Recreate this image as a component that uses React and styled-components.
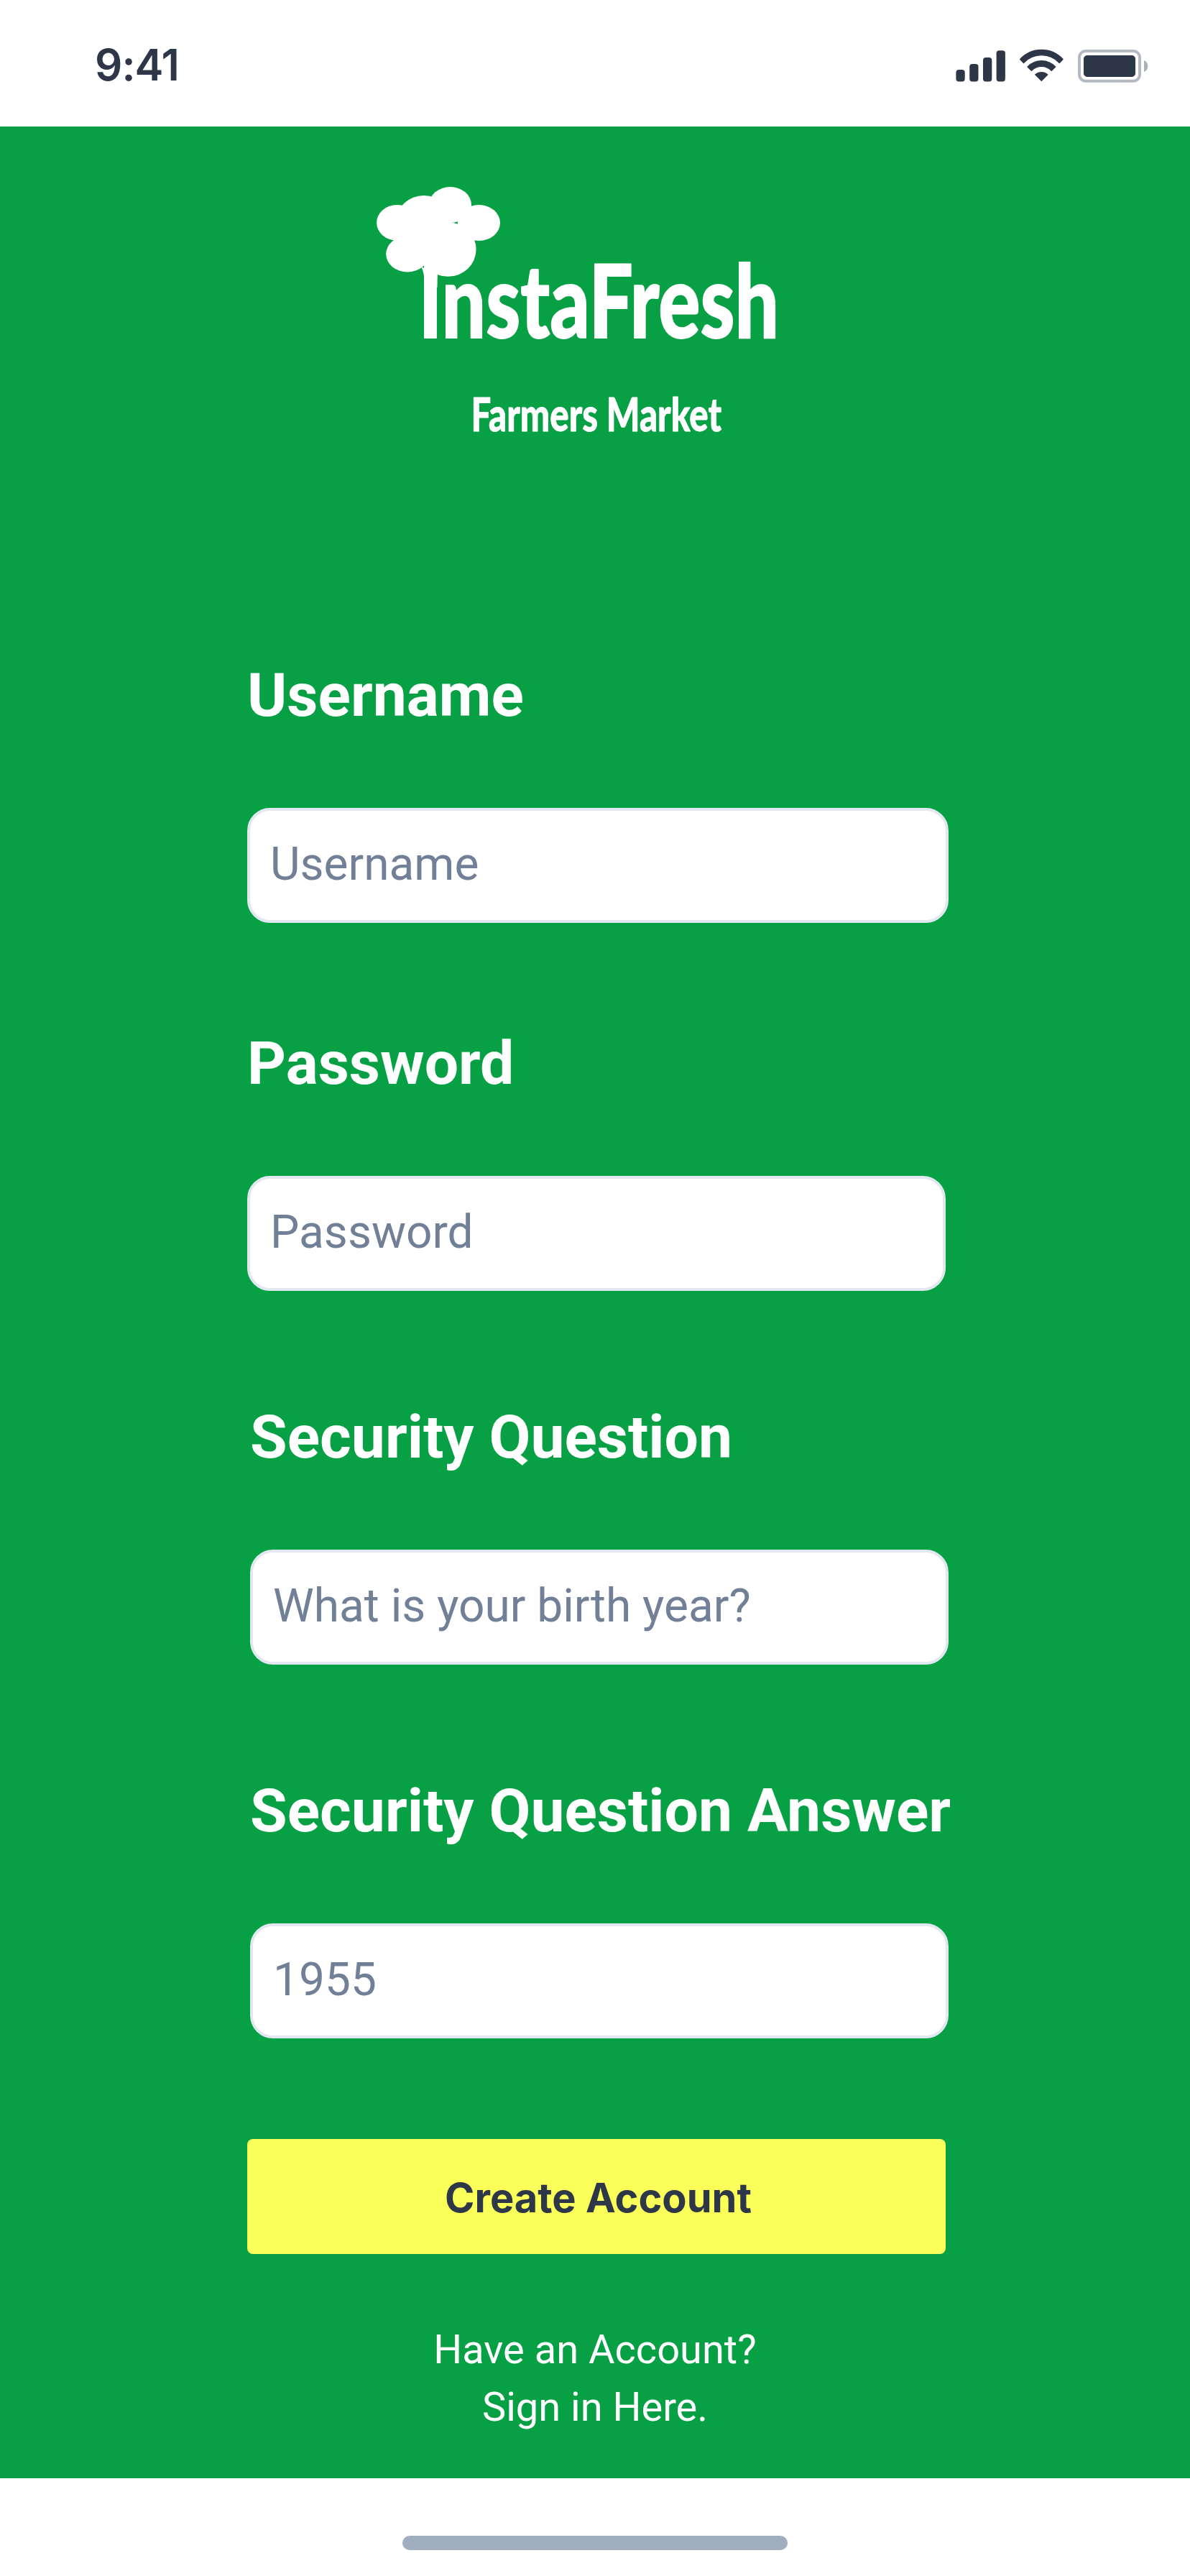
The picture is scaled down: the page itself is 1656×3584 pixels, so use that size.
import React from "react";
import styled, { createGlobalStyle } from "styled-components";

const GlobalStyle = createGlobalStyle`
  *, *::before, *::after { box-sizing: border-box; }
  body { margin: 0; background: #ffffff; }
`;

const ink = "#2d3748";

const Screen = styled.div`
  display: flex;
  flex-direction: column;
  width: 1656px;
  height: 3584px;
  background: #ffffff;
  font-family: Roboto, "Liberation Sans", sans-serif;
`;

const StatusBar = styled.header`
  display: flex;
  align-items: center;
  justify-content: space-between;
  height: 176px;
  padding: 4px 56px 0 132px;
`;

const Clock = styled.span`
  font-family: Inter, "Liberation Sans", sans-serif;
  font-size: 60px;
  font-weight: 600;
  line-height: 72px;
  letter-spacing: -1px;
  color: ${ink};
`;

const StatusIcons = styled.svg`
  display: block;
  width: 272px;
  height: 48px;
  margin-top: 4px;
`;

const Main = styled.main`
  display: flex;
  flex-direction: column;
  height: 3272px;
  background: #08a045;
`;

const Brand = styled.svg`
  display: block;
  width: 580px;
  height: 364px;
  margin: 74px 0 0 514px;
  fill: #ffffff;
  font-family: Lato, "Liberation Sans", sans-serif;
  font-weight: 900;
`;

const Wordmark = styled.text`
  font-size: ${(p) => p.$size}px;
  stroke: #ffffff;
  stroke-width: ${(p) => p.$size / 80}px;
  stroke-linejoin: round;
`;

const Form = styled.form`
  display: flex;
  flex-direction: column;
  align-items: flex-start;
  margin: 306px 0 0 344px;
`;

const Field = styled.label`
  display: flex;
  flex-direction: column;
  gap: 108px;
  margin: ${(p) => p.$top}px 0 0 ${(p) => p.$indent}px;
`;

const FieldTitle = styled.span`
  font-size: 84px;
  font-weight: 700;
  line-height: 96px;
  white-space: nowrap;
  color: #ffffff;
`;

const Input = styled.input`
  width: ${(p) => p.$width}px;
  height: 160px;
  padding: 0 28px 3px;
  border: 4px solid #e2e8f0;
  border-radius: 32px;
  outline: none;
  background: #ffffff;
  font-family: inherit;
  font-size: 64px;
  color: ${ink};

  &::placeholder {
    color: #718096;
    opacity: 1;
  }
`;

const SubmitButton = styled.button`
  width: 972px;
  height: 160px;
  margin-top: 140px;
  padding: 4px 0 0 5px;
  border: 0;
  border-radius: 8px;
  background: #faff5a;
  font-family: Inter, "Liberation Sans", sans-serif;
  font-size: 56px;
  font-weight: 700;
  line-height: 80px;
  color: ${ink};
`;

const SignInPrompt = styled.p`
  margin: 93px 0 0;
  font-size: 56px;
  line-height: 80px;
  text-align: center;
  color: #ffffff;
`;

const SignInLink = styled.a`
  display: block;
  color: inherit;
  text-decoration: none;
`;

const HomeBar = styled.footer`
  display: flex;
  justify-content: center;
  height: 136px;
  padding-top: 80px;
`;

const HomeIndicator = styled.div`
  width: 536px;
  height: 20px;
  border-radius: 10px;
  background: #a0aec0;
`;

const fields = [
  { title: "Username", hint: "Username", width: 976, indent: 0, top: 0 },
  { title: "Password", hint: "Password", width: 972, indent: 0, top: 148 },
  { title: "Security Question", hint: "What is your birth year?", width: 972, indent: 4, top: 156 },
  { title: "Security Question Answer", hint: "1955", width: 972, indent: 4, top: 156 },
];

const crown = [
  [552.8, 309.8, 28.7, 24.9],
  [590, 309, 39, 37],
  [626.5, 285, 29.5, 25],
  [666.4, 310, 29.6, 25],
  [567, 353.5, 29.8, 25],
  [623.6, 347, 39, 37.8],
];

function Logo() {
  return (
    <Brand viewBox="514 250 580 364">
      {crown.map(([cx, cy, rx, ry]) => (
        <ellipse key={cx} cx={cx} cy={cy} rx={rx} ry={ry} />
      ))}
      <path d="M586 372Q590 375 591.5 400H608.5L609 375Z" />
      <g transform="translate(582.5 470) scale(0.77 1)">
        <Wordmark $size={141}>InstaFresh</Wordmark>
      </g>
      <g transform="translate(655.5 600) scale(0.769 1)">
        <Wordmark $size={64}>Farmers Market</Wordmark>
      </g>
    </Brand>
  );
}

function Indicators() {
  return (
    <StatusIcons viewBox="1328 68 272 48" fill={ink}>
      <rect x="1330.4" y="97" width="12.3" height="16.5" rx="4" />
      <rect x="1349.2" y="89" width="12.3" height="24.5" rx="4" />
      <rect x="1368" y="80" width="12.3" height="33.5" rx="4" />
      <rect x="1386.6" y="70.3" width="12.3" height="43.2" rx="4" />
      <g stroke={ink} strokeWidth="1.4" strokeLinejoin="round">
        <path d="M1419.7 82.4A40.5 40.5 0 0 1 1479 82.4L1474.2 87.4A34 34 0 0 0 1424.5 87.4Z" />
        <path d="M1430 93.1A26.6 26.6 0 0 1 1468.7 93.1L1463.3 98.2A19.5 19.5 0 0 0 1435.4 98.2Z" />
        <path d="M1440.8 103.8A13 13 0 0 1 1457.8 103.8L1449.3 112.3Z" />
      </g>
      <rect x="1502" y="71" width="84" height="41.7" rx="9" fill="none" stroke="#b5b9c1" strokeWidth="4" />
      <rect x="1508" y="77" width="72" height="30" rx="5" />
      <path d="M1592 84A8.7 8.7 0 0 1 1592 100Z" fill="#abb0b9" />
    </StatusIcons>
  );
}

export default function App() {
  return (
    <Screen>
      <GlobalStyle />
      <StatusBar>
        <Clock>9:41</Clock>
        <Indicators />
      </StatusBar>
      <Main>
        <Logo />
        <Form>
          {fields.map((f) => (
            <Field key={f.title} $indent={f.indent} $top={f.top}>
              <FieldTitle>{f.title}</FieldTitle>
              <Input $width={f.width} placeholder={f.hint} />
            </Field>
          ))}
          <SubmitButton type="button">Create Account</SubmitButton>
        </Form>
        <SignInPrompt>
          Have an Account?
          <SignInLink>Sign in Here.</SignInLink>
        </SignInPrompt>
      </Main>
      <HomeBar>
        <HomeIndicator />
      </HomeBar>
    </Screen>
  );
}
